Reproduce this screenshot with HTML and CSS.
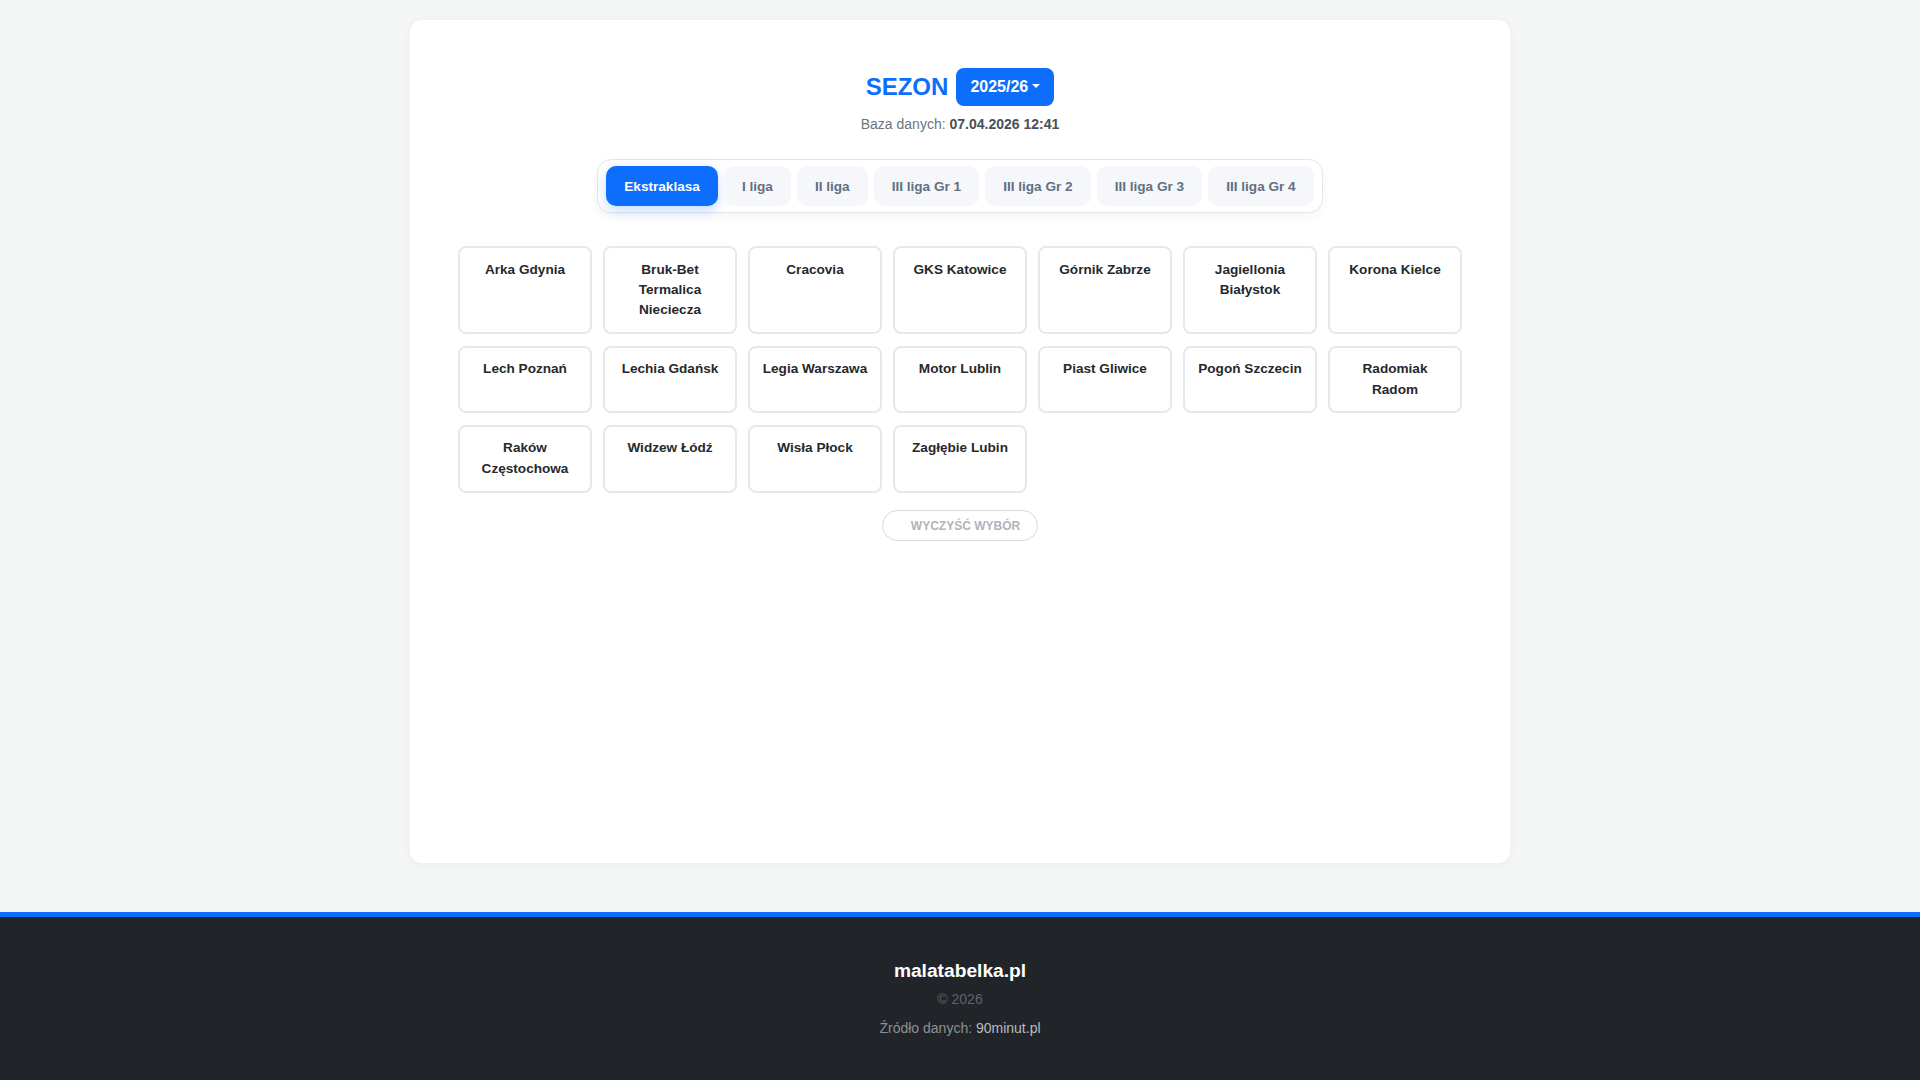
FILE: index.html
```html
<!DOCTYPE html>
<html lang="pl">
<head>
    <meta charset="UTF-8">
    <meta name="viewport" content="width=device-width, initial-scale=1.0">
    <title>malatabelka.pl</title>
    <link rel="stylesheet" href="styles.css">
</head>
<body>
    <main class="page">
        <div class="panel">
            <div class="season-head">
                <h1 class="season-title">SEZON</h1>
                <button class="season-btn dropdown-toggle">2025/26</button>
            </div>
            <p class="db-info">Baza danych: <strong>07.04.2026 12:41</strong></p>

            <nav class="league-nav">
                <button class="league-pill active">Ekstraklasa</button>
                <button class="league-pill">I liga</button>
                <button class="league-pill">II liga</button>
                <button class="league-pill">III liga Gr 1</button>
                <button class="league-pill">III liga Gr 2</button>
                <button class="league-pill">III liga Gr 3</button>
                <button class="league-pill">III liga Gr 4</button>
            </nav>

            <div class="team-grid">
                <div class="team-card">Arka Gdynia</div>
                <div class="team-card">Bruk-Bet Termalica Nieciecza</div>
                <div class="team-card">Cracovia</div>
                <div class="team-card">GKS Katowice</div>
                <div class="team-card">Górnik Zabrze</div>
                <div class="team-card">Jagiellonia Białystok</div>
                <div class="team-card">Korona Kielce</div>
                <div class="team-card">Lech Poznań</div>
                <div class="team-card">Lechia Gdańsk</div>
                <div class="team-card">Legia Warszawa</div>
                <div class="team-card">Motor Lublin</div>
                <div class="team-card">Piast Gliwice</div>
                <div class="team-card">Pogoń Szczecin</div>
                <div class="team-card">Radomiak Radom</div>
                <div class="team-card">Raków Częstochowa</div>
                <div class="team-card">Widzew Łódź</div>
                <div class="team-card">Wisła Płock</div>
                <div class="team-card">Zagłębie Lubin</div>
            </div>

            <div class="clear-row">
                <button class="clear-btn"><span class="clear-icon"></span>Wyczyść wybór</button>
            </div>
        </div>
    </main>

    <footer class="site-footer">
        <h5 class="footer-brand">malatabelka.pl</h5>
        <p class="footer-copy">© 2026</p>
        <p class="footer-source">Źródło danych: <span>90minut.pl</span></p>
    </footer>
</body>
</html>
```

FILE: styles.css
```css
html {
    box-sizing: border-box;
}

*, *::before, *::after {
    box-sizing: inherit;
}

body {
    margin: 0;
    min-height: 100vh;
    display: flex;
    flex-direction: column;
    background: #f4f5f5;
    font-family: "Liberation Sans", Arial, sans-serif;
    color: #212529;
}

.page {
    flex: 1;
    padding: 20px 0 49px;
}

.panel {
    width: 1100px;
    min-height: 843px;
    margin: 0 auto;
    padding: 48px 48px 48px;
    background: white;
    border-radius: 12px;
    box-shadow: 0 2px 10px rgba(0, 0, 0, 0.04);
}

/* Season header */

.season-head {
    display: flex;
    justify-content: center;
    align-items: center;
    gap: 8px;
}

.season-title {
    margin: 0;
    font-size: 24px;
    font-weight: 700;
    line-height: 1;
    color: #0d6efd;
}

.season-btn {
    height: 38px;
    padding: 0 14px;
    border: none;
    border-radius: 8px;
    background: #0d6efd;
    color: white;
    font-family: inherit;
    font-size: 16px;
    font-weight: 700;
    cursor: pointer;
}

.dropdown-toggle::after {
    content: "";
    display: inline-block;
    margin-left: 0.255em;
    vertical-align: 0.255em;
    border-top: 0.3em solid;
    border-right: 0.3em solid transparent;
    border-left: 0.3em solid transparent;
}

.db-info {
    margin: 8px 0 0;
    text-align: center;
    font-size: 14px;
    line-height: 21px;
    color: #6c757d;
}

.db-info strong {
    color: #495057;
}

/* League tabs */

.league-nav {
    display: flex;
    gap: 6px;
    width: fit-content;
    margin: 24px auto 0;
    padding: 6px 8px;
    border: 1px solid #e2e6ea;
    border-radius: 14px;
    background: white;
    box-shadow: 0 4px 12px rgba(0, 0, 0, 0.04);
}

.league-pill {
    height: 40px;
    padding: 0 18px;
    border: none;
    border-radius: 10px;
    background: #f5f7fb;
    color: #627082;
    font-family: inherit;
    font-size: 13.6px;
    font-weight: 700;
    cursor: pointer;
}

.league-pill.active {
    background: #0d6efd;
    color: white;
    box-shadow: 0 4px 12px rgba(13, 110, 253, 0.25);
}

/* Teams */

.team-grid {
    display: grid;
    grid-template-columns: repeat(7, 1fr);
    gap: 11.5px 11px;
    margin-top: 33px;
}

.team-card {
    padding: 11.5px 8px;
    border: 2px solid #e5e9ed;
    border-radius: 8px;
    text-align: center;
    font-size: 13.6px;
    font-weight: 700;
    line-height: 1.5;
    color: #25292d;
    cursor: pointer;
}

.clear-row {
    display: flex;
    justify-content: center;
    margin-top: 17.5px;
}

.clear-btn {
    display: flex;
    align-items: center;
    height: 31px;
    padding: 0 17px 0 16px;
    border: 1px solid #d6dadf;
    border-radius: 999px;
    background: white;
    color: #adb5bd;
    font-family: inherit;
    font-size: 12px;
    font-weight: 700;
    text-transform: uppercase;
    cursor: pointer;
}

.clear-icon {
    display: inline-block;
    width: 8px;
    height: 8px;
    margin-right: 4px;
}

/* Footer */

.site-footer {
    padding: 42px 0 41px;
    border-top: 5px solid #0d6efd;
    background: #212529;
    text-align: center;
    font-size: 14px;
    line-height: 21px;
}

.footer-brand {
    margin: 0 0 6px;
    font-size: 19.2px;
    line-height: 24px;
    font-weight: 700;
    color: white;
}

.footer-copy {
    margin: 0 0 8px;
    color: #5f6469;
}

.footer-source {
    margin: 0;
    color: #8c9196;
}

.footer-source span {
    color: #b8bcc0;
}
```
